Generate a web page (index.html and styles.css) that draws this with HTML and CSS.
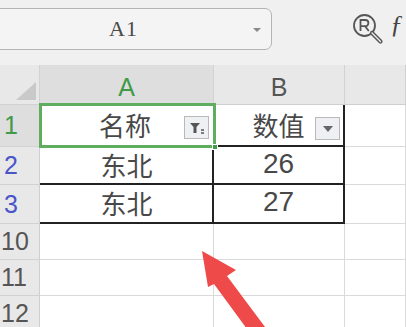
FILE: index.html
```html
<!DOCTYPE html>
<html>
<head>
<meta charset="utf-8">
<link rel="stylesheet" href="styles.css">
</head>
<body>
<div class="app">
  <div class="toolbar">
    <div class="namebox">
      <span class="nb-text">A1</span>
      <span class="nb-arrow"></span>
    </div>
    <svg class="zoom-icon" width="32" height="32" viewBox="0 0 32 32">
      <circle cx="12.5" cy="12.5" r="10.5" fill="none" stroke="#555" stroke-width="1.8"/>
      <path d="M8.5 18V7h4.8a3.1 3.1 0 0 1 0 6.2H8.5M13 13.2l3.8 4.8" fill="none" stroke="#555" stroke-width="1.8"/>
      <path d="M20 20l8.5 8.5" stroke="#555" stroke-width="4.2" stroke-linecap="round"/>
      <path d="M20 20l8.5 8.5" stroke="#f0f0f0" stroke-width="1.4" stroke-linecap="round"/>
    </svg>
    <span class="fx">ƒ</span>
  </div>
  <div class="sheet">
    <div class="corner"><span class="tri"></span></div>
    <div class="colhead sel">A</div>
    <div class="colhead">B</div>
    <div class="colhead"></div>

    <div class="rowhead selrow">1</div>
    <div class="cell a1">名称
      <span class="fbtn"><svg width="18" height="16" viewBox="0 0 18 16"><path d="M2 3h10l-3.5 4v6h-3V7z" fill="#555"/><path d="M13 10h3M13 13h3" stroke="#555" stroke-width="1.3"/></svg></span>
    </div>
    <div class="cell b tb-right">数值
      <span class="fbtn"><svg width="12" height="8" viewBox="0 0 12 8"><path d="M1 1h10L6 7z" fill="#666"/></svg></span>
    </div>
    <div class="cell c"></div>

    <div class="rowhead blue">2</div>
    <div class="cell a tb-top">东北</div>
    <div class="cell b num tb-top tb-right tb-left">26</div>
    <div class="cell c"></div>

    <div class="rowhead blue">3</div>
    <div class="cell a tb-top tb-bottom">东北</div>
    <div class="cell b num tb-top tb-right tb-left tb-bottom">27</div>
    <div class="cell c"></div>

    <div class="rowhead">10</div>
    <div class="cell a"></div>
    <div class="cell b"></div>
    <div class="cell c"></div>

    <div class="rowhead">11</div>
    <div class="cell a"></div>
    <div class="cell b"></div>
    <div class="cell c"></div>

    <div class="rowhead">12</div>
    <div class="cell a"></div>
    <div class="cell b"></div>
    <div class="cell c"></div>

    <div class="selbox"><span class="handle"></span></div>
  </div>
  <svg class="arrow" width="406" height="327" viewBox="0 0 406 327">
    <path d="M202 251 L236 270 L227 276 L271 335 L258 344 L214 284 L208 287 Z" fill="#ef4a4a"/>
  </svg>
</div>
</body>
</html>
```
FILE: styles.css
```css
* { box-sizing: border-box; }
html, body { margin: 0; padding: 0; }
body {
  width: 406px;
  height: 327px;
  overflow: hidden;
  background: #f0f0f0;
  font-family: "Noto Sans CJK SC", "Noto Sans", sans-serif;
}
.app { position: relative; width: 406px; height: 327px; overflow: hidden; }
.toolbar {
  height: 65px;
  display: flex;
  align-items: flex-start;
  background: #f0f0f0;
  position: relative;
}
.namebox {
  margin-top: 8px;
  margin-left: -12px;
  width: 284px;
  height: 42px;
  border: 1px solid #b4b4b4;
  border-radius: 7px;
  background: #f4f4f4;
  position: relative;
}
.nb-text {
  position: absolute;
  left: 120px;
  top: 8px;
  font-family: "Liberation Serif", serif;
  font-size: 22px;
  line-height: 24px;
  letter-spacing: 1px;
  color: #4a4a4a;
}
.nb-arrow {
  position: absolute;
  right: 10px;
  top: 19px;
  width: 0; height: 0;
  border-left: 4px solid transparent;
  border-right: 4px solid transparent;
  border-top: 4px solid #888;
}
.zoom-icon { margin-top: 13px; margin-left: 80px; }
.fx {
  margin-top: 10px;
  margin-left: 6px;
  font-family: "Liberation Serif", serif;
  font-style: italic;
  font-size: 26px;
  color: #444;
}
.sheet {
  position: relative;
  display: grid;
  grid-template-columns: 40px 174px 131px 61px;
  grid-template-rows: 40px 42px 38px 39px 36px 36px 36px;
  background: #fff;
}
.corner, .colhead, .rowhead {
  background: #e8e8e8;
  color: #555;
  display: flex;
  align-items: center;
  justify-content: center;
}
.corner {
  position: relative;
  border-right: 1px solid #d2d2d2;
  border-bottom: 1px solid #d2d2d2;
}
.tri {
  position: absolute;
  right: 3px;
  bottom: 4px;
  width: 0; height: 0;
  border-left: 20px solid transparent;
  border-bottom: 18px solid #c9c9c9;
}
.colhead {
  font-family: "Liberation Sans", "Noto Sans", sans-serif;
  font-size: 25px;
  padding-top: 6px;
  border-right: 1px solid #d2d2d2;
  border-bottom: 1px solid #cfcfcf;
}
.colhead.sel { background: #dedede; color: #3f9a4a; }
.rowhead {
  font-family: "Liberation Sans", "Noto Sans", sans-serif;
  font-size: 25px;
  justify-content: flex-start;
  padding-left: 1px;
  border-right: 1px solid #cfcfcf;
  border-bottom: 1px solid #d2d2d2;
  color: #555;
}
.rowhead.selrow { background: #dedede; color: #3f9a4a; padding-left: 4px; }
.rowhead.blue { color: #4a55c8; padding-left: 4px; }
.cell {
  position: relative;
  display: flex;
  align-items: center;
  justify-content: center;
  font-size: 26px;
  color: #484848;
  border-right: 1px solid #dadada;
  border-bottom: 1px solid #dadada;
  background: #fff;
  padding-bottom: 3px;
}
.cell.b { font-size: 26px; }
.cell.num { font-family: "Liberation Sans", sans-serif; font-size: 28px; padding-top: 0; }
.cell.a1 { justify-content: flex-start; padding-left: 59px; }
.tb-top { border-top: 2px solid #222; margin-top: -2px; }
.tb-bottom { border-bottom: 2px solid #222; }
.tb-right { border-right: 2px solid #222; }
.tb-left { border-left: 2px solid #222; margin-left: -2px; }
.fbtn {
  position: absolute;
  right: 3px;
  top: 12px;
  width: 25px;
  height: 23px;
  border: 1px solid #b9b9b9;
  background: #eef0f3;
  display: flex;
  align-items: center;
  justify-content: center;
}
.a1 .fbtn { right: 4px; top: 11px; }
.selbox {
  position: absolute;
  left: 39px;
  top: 38px;
  width: 177px;
  height: 45px;
  border: 3px solid #5fae5f;
  pointer-events: none;
}
.handle {
  position: absolute;
  right: -5px;
  bottom: -5px;
  width: 6px;
  height: 6px;
  background: #3f9a4a;
  border: 1px solid #fff;
}
.arrow { position: absolute; left: 0; top: 0; pointer-events: none; }
```
